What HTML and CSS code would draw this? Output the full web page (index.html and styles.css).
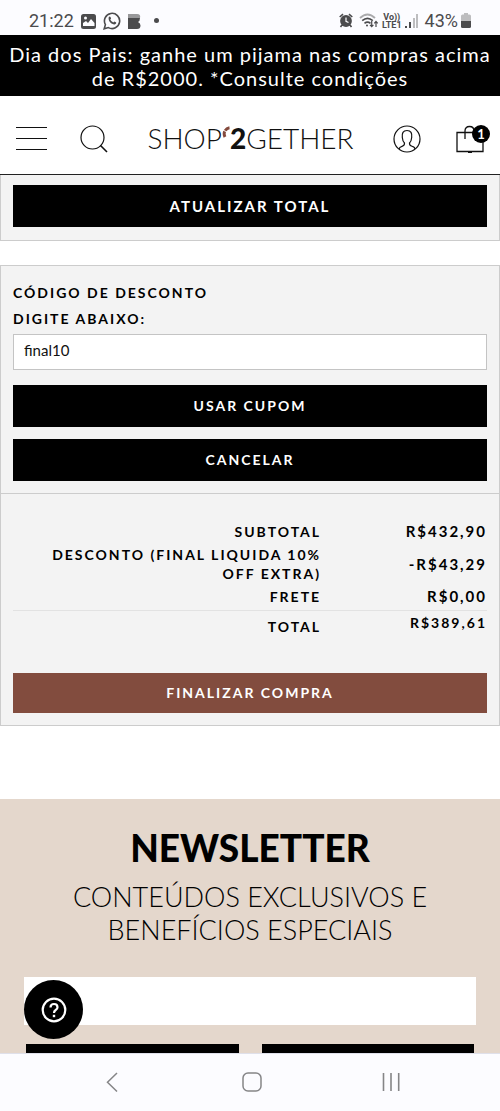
FILE: index.html
```html
<!DOCTYPE html>
<html lang="pt-BR">
<head>
<meta charset="utf-8">
<meta name="viewport" content="width=device-width, initial-scale=1">
<title>Shop2gether</title>
<link rel="stylesheet" href="styles.css">
</head>
<body>
<div class="screen">
  <div class="status">
    <div class="status-group">
      <span class="status-text">21:22</span>
      <svg class="status-photo" width="15" height="16" viewBox="0 0 15 16"><rect y="1" width="15" height="15" rx="2.500" fill="#4b4b4d"/><circle cx="4.500" cy="5" r="1.500" fill="#fcfcff"/><path d="M2 13V10l3-2 2 2 3-4 3.500 4v3z" fill="#fcfcff"/></svg>
      <svg class="status-whats" width="18" height="18" viewBox="0 0 18 18" fill="none" stroke="#4b4b4d" stroke-width="1.600"><path d="M1.200 16.800l1.200-4.200A7.600 7.600 0 1 1 5.400 15.600z"/><path d="M5.700 5.300c.6-1 1.500-.9 1.900 0l.5 1.200-.8 1.100c.7 1.400 1.600 2.200 3 2.900l1-1 1.600.8c.9.500.1 2-1.300 2.200-3 .1-6.700-3.500-5.900-7.200z" fill="#4b4b4d" stroke="none"/></svg>
      <svg class="status-b" width="14" height="16" viewBox="0 0 14 16"><path d="M0 1h9q4 0 3 4H0z" fill="#98989a"/><path d="M0 5h12q0 3-2 4 2.500 1 2.500 3.500Q12.500 16 9 16H0z" fill="#4b4b4d"/></svg>
      <span class="status-dot"></span>
    </div>
    <div class="status-group status-right">
      <svg width="14" height="15" viewBox="0 0 14 15"><circle cx="7" cy="8" r="5.900" fill="#4b4b4d"/><path d="M.7 4L4 1.200M13.300 4L10 1.200M3 12l-1.500 2M11 12l1.500 2" stroke="#4b4b4d" stroke-width="1.600"/><path d="M7 4.500V8.300l2.500 1.200" fill="none" stroke="#fcfcff" stroke-width="1.200"/></svg>
      <svg class="status-wifi" width="20" height="15" viewBox="0 0 20 15" fill="none" stroke="#4b4b4d"><path d="M1 5q7.500-7 15 0" stroke="#aaaaac" stroke-width="1.800"/><path d="M3.200 7.700q5.300-4.800 10.600 0M5.500 10.300q3-2.500 6 0" stroke-width="1.600"/><circle cx="8" cy="12.500" r="1" fill="#4b4b4d" stroke="none"/><path d="M12.700 8v5.500M11 11.800l1.700 1.900 1.700-1.900M17 14V8.600M15.300 10.300L17 8.400l1.700 1.900" stroke-width="1.200"/></svg>
      <span class="lte"><span>Vo))</span><span>LTE1</span></span>
      <svg class="status-signal" width="13" height="14" viewBox="0 0 13 14"><path d="M0 12h2v2H0zM4 8h2v6H4z" fill="#4b4b4d"/><path d="M8 4h2v10H8zM11 0h2v14h-2z" fill="#bdbdbf"/></svg>
      <span class="status-text battery-text">43%</span>
      <svg width="10" height="15" viewBox="0 0 10 15"><path d="M3 0h4v1.500h1.500Q10 1.500 10 3v5H0V3q0-1.500 1.500-1.500H3z" fill="#bdbdbf"/><path d="M0 8h10v5.500Q10 15 8.500 15h-7Q0 15 0 13.500z" fill="#4b4b4d"/></svg>
    </div>
  </div>

  <p class="promo">Dia dos Pais: ganhe um pijama nas compras acima de R$2000. *Consulte condições</p>

  <header class="header">
    <button class="icon-button" type="button" aria-label="Menu">
      <svg width="31" height="26" viewBox="0 0 31 26" stroke="#111" stroke-width="1.200"><path d="M0 1.500h31M0 12.500h31M0 23.500h31"/></svg>
    </button>
    <button class="icon-button search" type="button" aria-label="Buscar">
      <svg width="28" height="28" viewBox="0 0 28 28" fill="none" stroke="#111" stroke-width="1.200"><circle cx="12.500" cy="12.500" r="11.500"/><path d="M20.500 20.500l6.500 6.500" stroke-width="1.600"/></svg>
    </button>
    <a class="logo" href="#">
      <span>SHOP</span>
      <svg class="logo-mark" width="8" height="12" viewBox="0 0 8 12" fill="none" stroke="#84493c" stroke-width="3"><path d="M7.500 1.800Q4.500 2.200 3.200 4.600M2.700 5.400Q1.500 8 3 11"/></svg>
      <strong>2</strong>
      <span>GETHER</span>
    </a>
    <button class="icon-button account" type="button" aria-label="Minha conta">
      <svg width="28" height="28" viewBox="0 0 28 28" fill="none" stroke="#111" stroke-width="1.200"><circle cx="14" cy="14" r="13"/><path d="M6 24q.5-2 3-2.700c2-.6 2.700-1.200 2.500-3.300-1.800-1.600-2-3.200-2.200-5.500C8.800 8 10 5.500 14 5.500S19.200 8 18.700 12.500c-.2 2.300-.4 3.900-2.200 5.500-.2 2.100.5 2.700 2.500 3.300 2.500.7 3 1.700 3 2.700"/></svg>
    </button>
    <a class="bag" href="#" aria-label="Sacola">
      <svg width="28" height="28" viewBox="0 0 28 28" fill="none" stroke="#111" stroke-width="1.300"><path d="M1 7.500h26V26.500H1zM9 14V6q0-4.500 4.500-4.500T18 6M12 27.300h4"/></svg>
      <span class="badge">1</span>
    </a>
  </header>

  <main class="page">
    <section class="panel panel-top">
      <button class="button button-large" type="button">ATUALIZAR TOTAL</button>
    </section>

    <div class="panel summary">
      <form class="coupon">
        <h2 class="caption">CÓDIGO DE DESCONTO</h2>
        <label class="caption" for="coupon">DIGITE ABAIXO:</label>
        <input class="field" id="coupon" type="text" value="final10">
        <button class="button" type="button">USAR CUPOM</button>
        <button class="button" type="button">CANCELAR</button>
      </form>
      <section class="totals">
        <table class="table">
          <tbody>
            <tr><th scope="row">SUBTOTAL</th><td>R$432,90</td></tr>
            <tr><th scope="row">DESCONTO (FINAL LIQUIDA 10% OFF EXTRA)</th><td>-R$43,29</td></tr>
            <tr><th scope="row">FRETE</th><td>R$0,00</td></tr>
          </tbody>
          <tfoot>
            <tr><th scope="row">TOTAL</th><td>R$389,61</td></tr>
          </tfoot>
        </table>
        <button class="button checkout" type="button">FINALIZAR COMPRA</button>
      </section>
    </div>

    <section class="newsletter">
      <h2 class="news-title">NEWSLETTER</h2>
      <p class="news-text">CONTEÚDOS EXCLUSIVOS E BENEFÍCIOS ESPECIAIS</p>
      <input class="email" type="email" aria-label="E-mail">
      <div class="news-actions">
        <button type="button" aria-label="Feminino"></button>
        <button type="button" aria-label="Masculino"></button>
      </div>
    </section>

    <button class="help" type="button" aria-label="Ajuda">
      <svg width="26" height="26" viewBox="0 0 26 26" fill="none" stroke="#fff" stroke-width="2.200"><circle cx="13" cy="13" r="11.300"/><path d="M9.500 10.500q0-3.500 3.500-3.500t3.500 3.200q0 1.600-1.800 2.800T13 16"/><path d="M13 17.800v2.400" stroke-width="2.400"/></svg>
    </button>
  </main>

  <nav class="system-nav">
    <button class="icon-button" type="button" aria-label="Voltar"><svg width="22" height="22" viewBox="0 0 22 22" fill="none" stroke="#858587" stroke-width="1.500"><path d="M16 2L6.500 11.300 16 20.500"/></svg></button>
    <button class="icon-button" type="button" aria-label="Início"><svg width="22" height="22" viewBox="0 0 22 22" fill="none" stroke="#858587" stroke-width="1.500"><rect x="2" y="2" width="18" height="18" rx="5"/></svg></button>
    <button class="icon-button" type="button" aria-label="Recentes"><svg width="22" height="22" viewBox="0 0 22 22" stroke="#858587" stroke-width="1.600"><path d="M3.500 2v18M11 2v18M18.700 2v18"/></svg></button>
  </nav>
</div>
</body>
</html>
```
FILE: styles.css
```css
* { box-sizing: border-box; }

body {
  margin: 0;
  background: #fff;
  color: #000;
  font-family: Lato, "Liberation Sans", sans-serif;
}

h2, p { margin: 0; }
svg { display: block; flex: none; }

button {
  padding: 0;
  border: 0;
  border-radius: 0;
  font-family: inherit;
}

.screen {
  display: flex;
  flex-direction: column;
  height: 100vh;
}

.status {
  flex: none;
  display: flex;
  justify-content: space-between;
  align-items: center;
  height: 35px;
  padding: 6px 29px 0;
  background: #fcfcff;
  color: #4b4b4d;
  font-family: Roboto, sans-serif;
}
.status-group { display: flex; align-items: center; gap: 7px; }
.status-right { gap: 3px; }
.status-text { font-size: 18px; line-height: 20px; }
.battery-text { margin-left: 4px; }
.status-dot { width: 5px; height: 5px; margin-left: 5px; border-radius: 50%; background: #4b4b4d; }
.status-wifi { margin-left: 3px; }
.lte { display: flex; flex-direction: column; font-size: 9px; font-weight: 700; line-height: 8px; text-align: center; }

.promo {
  flex: none;
  padding: 7px 0 6px;
  background: #000;
  color: #fff;
  font-size: 20px;
  line-height: 24px;
  letter-spacing: 1px;
  text-align: center;
}

.header {
  flex: none;
  display: flex;
  align-items: center;
  height: 79px;
  padding: 8px 16px 0;
  border-bottom: 1px solid #222;
}
.icon-button { display: flex; background: none; }
.search { margin-left: 33px; }
.logo {
  display: flex;
  align-items: center;
  margin: 0 auto;
  padding-bottom: 3px;
  color: #111;
  font-size: 28px;
  font-weight: 300;
  line-height: 32px;
  text-decoration: none;
}
.logo strong { font-weight: 900; }
.logo-mark { align-self: flex-start; margin-top: 4px; }
.bag { position: relative; margin-left: 35px; }
.badge {
  position: absolute;
  top: 0;
  right: -6px;
  width: 18px;
  height: 18px;
  border-radius: 50%;
  background: #000;
  color: #fff;
  font-size: 13px;
  font-weight: 700;
  line-height: 18px;
  text-align: center;
}

.page {
  position: relative;
  flex: 1;
  min-height: 0;
  overflow: hidden;
}

.panel { border: 1px solid #ccc; background: #f3f3f3; }
.panel-top { border-top: 0; padding: 10px 12px 13px; }
.summary { margin-top: 24px; }

.button {
  display: block;
  width: 100%;
  height: 42px;
  padding-bottom: 1px;
  background: #000;
  color: #fff;
  font-size: 14px;
  font-weight: 700;
  letter-spacing: 2px;
}
.button-large { font-size: 15px; }
.coupon { padding: 14px 12px 12px; }
.coupon .button + .button { margin-top: 12px; }
.caption {
  display: block;
  font-size: 14px;
  font-weight: 700;
  line-height: 26px;
  letter-spacing: 2px;
}
.field {
  display: block;
  width: 100%;
  height: 36px;
  margin: 2px 0 15px;
  padding: 0 10px 4px;
  border: 1px solid #c4c4c4;
  border-radius: 0;
  background: #fff;
  color: #111;
  font-family: inherit;
  font-size: 15px;
}

.totals { padding: 26px 12px 12px; border-top: 1px solid #ccc; }
.table {
  width: 100%;
  margin-bottom: 35px;
  border-collapse: collapse;
  font-size: 15px;
  font-weight: 700;
  line-height: 19px;
  letter-spacing: 2px;
  text-align: right;
}
.table th { width: 65%; padding: 2px 0 2px 12px; font-size: 14px; text-align: right; }
.table td { padding: 2px 0; }
.table tbody tr:last-child > * { padding-bottom: 4px; }
.table tfoot tr { border-top: 1px solid #e2e2e2; }
.table tfoot th { padding-top: 6px; }
.table tfoot td { vertical-align: top; font-size: 14px; }
.checkout { height: 40px; background: #824c3e; }

.newsletter {
  margin-top: 73px;
  padding: 29px 24px 0;
  background: #e4d7cc;
  text-align: center;
}
.news-title { font-size: 37px; font-weight: 900; line-height: 40px; }
.news-text { margin: 12px 0 31px; font-size: 27px; font-weight: 300; line-height: 33px; }
.email {
  display: block;
  width: 100%;
  height: 48px;
  border: 0;
  border-radius: 0;
  background: #fff;
}
.news-actions { display: flex; gap: 23px; padding: 19px 2px 24px; }
.news-actions button { flex: 1; height: 48px; background: #000; }

.help {
  position: absolute;
  left: 24px;
  bottom: 14px;
  display: flex;
  align-items: center;
  justify-content: center;
  width: 59px;
  height: 59px;
  border-radius: 50%;
  background: #000;
}

.system-nav {
  flex: none;
  display: flex;
  justify-content: space-between;
  align-items: center;
  height: 58px;
  padding: 0 98px 2px 101px;
  border-top: 1px solid #dfe0ea;
  background: #fcfcff;
}
```
